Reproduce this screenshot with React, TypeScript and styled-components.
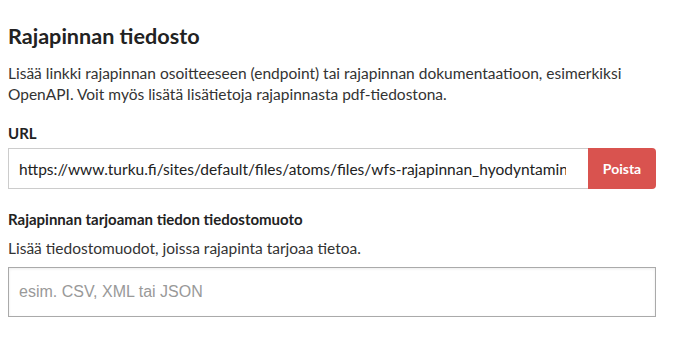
import styled, { createGlobalStyle } from 'styled-components';

const GlobalStyle = createGlobalStyle`
  body {
    margin: 0;
    background: #fff;
    font-family: Lato, "Noto Sans", sans-serif;
    color: #222;
  }
`;

const App = () => {
  return (
    <>
      <GlobalStyle />
      <Section>
        <Title>Rajapinnan tiedosto</Title>
        <Help>
          Lisää linkki rajapinnan osoitteeseen (endpoint) tai rajapinnan dokumentaatioon, esimerkiksi
          OpenAPI. Voit myös lisätä lisätietoja rajapinnasta pdf-tiedostona.
        </Help>
        <Field>
          <Label>URL</Label>
          <InputRow>
            <UrlInput
              readOnly
              value="https://www.turku.fi/sites/default/files/atoms/files/wfs-rajapinnan_hyodyntaminen.pdf"
            />
            <RemoveButton>Poista</RemoveButton>
          </InputRow>
        </Field>
        <Field>
          <Label>Rajapinnan tarjoaman tiedon tiedostomuoto</Label>
          <FieldHelp>Lisää tiedostomuodot, joissa rajapinta tarjoaa tietoa.</FieldHelp>
          <TagInput placeholder="esim. CSV, XML tai JSON" />
        </Field>
      </Section>
    </>
  );
};

export default App;

const Section = styled.div`
  width: 648px;
  padding: 22px 0 0 8px;
`;

const Title = styled.h2`
  margin: 0 0 13px;
  font-size: 21.6px;
  font-weight: 700;
  line-height: 28px;
  color: #222;
`;

const Help = styled.p`
  margin: 0 0 18px;
  font-size: 15.5px;
  line-height: 21px;
  color: #333;
`;

const FieldHelp = styled(Help)`
  margin: 4px 0 8px;
`;

const Field = styled.div`
  display: flex;
  flex-direction: column;
  margin-bottom: 20px;
`;

const Label = styled.label`
  font-size: 15px;
  font-weight: 700;
  line-height: 20px;
  margin-bottom: 5px;
  color: #222;
`;

const InputRow = styled.div`
  display: flex;
  height: 41px;
`;

const UrlInput = styled.input`
  flex: 1;
  min-width: 0;
  box-sizing: border-box;
  height: 100%;
  border: 1px solid #ccc;
  border-right: none;
  padding: 0 22px 0 10px;
  font-family: Lato, "Noto Sans", sans-serif;
  font-size: 15.5px;
  color: #222;
  outline: none;
`;

const RemoveButton = styled.button`
  width: 68px;
  height: 100%;
  border: none;
  border-radius: 0 4px 4px 0;
  background: #d9534f;
  color: #fff;
  font-family: Lato, "Noto Sans", sans-serif;
  font-size: 14px;
  font-weight: 700;
  cursor: pointer;
`;

const TagInput = styled.input`
  box-sizing: border-box;
  height: 50px;
  width: 100%;
  border: 1px solid #aaa;
  box-shadow: inset 0 1px 3px rgba(0, 0, 0, 0.08);
  padding: 0 10px;
  font-family: "Liberation Sans", Arial, sans-serif;
  font-size: 16px;
  outline: none;
  &::placeholder {
    color: #999;
  }
`;
